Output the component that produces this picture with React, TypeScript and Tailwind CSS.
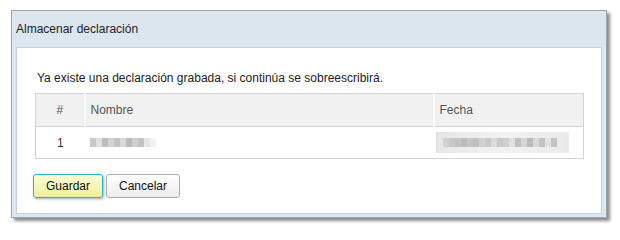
import React from 'react'

// Blurred placeholder made of gray blocks (stands in for pixelated data)
const Blur: React.FC<{ shades: string[]; cell?: string }> = ({ shades, cell = 'w-[6px]' }) => (
  <div className="flex h-[9px]">
    {shades.map((c, i) => (
      <span key={i} className={`${cell} h-full`} style={{ backgroundColor: c }} />
    ))}
  </div>
)

const nameShades = ['#c8c8c8', '#e0e0e0', '#bdbdbd', '#d4d4d4', '#c4c4c4', '#d8d8d8', '#bcbcbc', '#cfcfcf', '#c2c2c2', '#e6e6e6', '#f2f2f2']
const dateShades = [
  '#d0d0d0', '#c8c8c8', '#c4c4c4', '#bcbcbc', '#c6c6c6', '#bfbfbf', '#d2d2d2', '#c9c9c9',
  '#dadada', '#c8c8c8', '#cfcfcf', '#e0e0e0', '#c0c0c0', '#d6d6d6', '#bababa', '#d8d8d8',
  '#c2c2c2', '#e2e2e2', '#c4c4c4',
]

export default function App() {
  return (
    <div className="w-[620px] h-[231px] bg-white pt-[10px] pl-[11px] font-['Liberation_Sans',Arial,sans-serif] text-[12px] text-[#222]">
      <div className="w-[596px] h-[208px] border border-[#9ea6ad] bg-[#dce6ef] shadow-[3px_3px_3px_rgba(0,0,0,0.45)] flex flex-col">
        <div className="h-[36px] pl-[4px] flex items-center text-[#222]">Almacenar declaración</div>
        <div className="mx-[4px] h-[167px] border border-[#c3d2df] bg-white pl-[18px] pt-[23px]">
          <p className="pl-[2px] leading-[14px] text-[#222]">
            Ya existe una declaración grabada, si continúa se sobreescribirá.
          </p>
          <table className="mt-[8px] w-[549px] border border-[#d3d3d3] border-collapse text-[#555]">
            <thead>
              <tr className="h-[33px] bg-[#f1f1f1] border-b border-[#d3d3d3]">
                <th className="w-[49px] font-normal text-center border-r-2 border-[#fafafa]">#</th>
                <th className="w-[349px] font-normal text-left pl-[5px] border-r-2 border-[#fafafa]">Nombre</th>
                <th className="font-normal text-left pl-[5px]">Fecha</th>
              </tr>
            </thead>
            <tbody>
              <tr className="h-[32px]">
                <td className="text-center text-[#333]">1</td>
                <td className="pl-[5px]">
                  <Blur shades={nameShades} />
                </td>
                <td className="pl-[2px]">
                  <div className="w-[133px] h-[21px] bg-gradient-to-r from-[#e6e6e6] via-[#f2f2f2] to-[#e9e9e9] flex items-center pl-[5px] border-l-2 border-[#e0e0e0]">
                    <Blur shades={dateShades} />
                  </div>
                </td>
              </tr>
            </tbody>
          </table>
          <div className="mt-[15px] -ml-[2px] flex gap-[3px]">
            <button className="w-[70px] h-[24px] rounded-[3px] border border-[#2fb0c2] bg-gradient-to-b from-[#fcfcd6] to-[#efef9e] shadow-[1px_1px_3px_rgba(0,80,90,0.45)] text-[#111]">
              Guardar
            </button>
            <button className="w-[74px] h-[24px] rounded-[3px] border border-[#ababab] bg-gradient-to-b from-[#ffffff] to-[#ececec] text-[#111]">
              Cancelar
            </button>
          </div>
        </div>
      </div>
    </div>
  )
}
